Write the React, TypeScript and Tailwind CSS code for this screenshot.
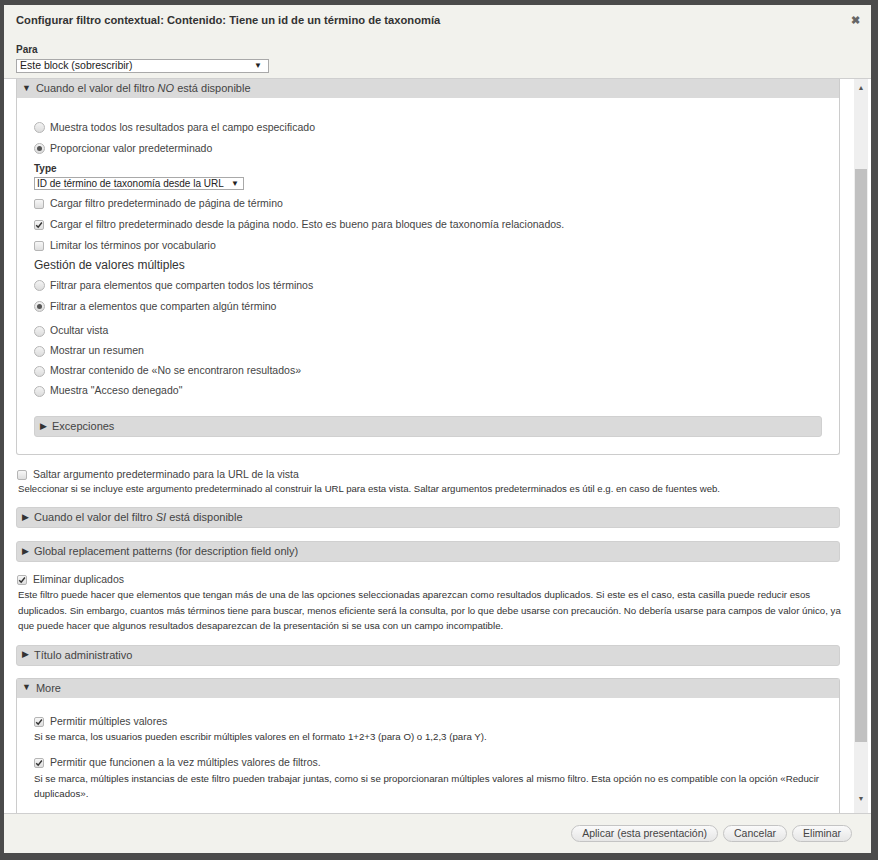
import React from "react";

const font = { fontFamily: '"Liberation Sans", Arial, sans-serif' };

function Radio({ checked = false }: { checked?: boolean }) {
  return (
    <span className="flex size-[11px] shrink-0 items-center justify-center rounded-full border border-[#b5b5b5] bg-[linear-gradient(#f4f4f4,#dcdcdc)]">
      {checked && <span className="size-[5px] rounded-full bg-[#555]" />}
    </span>
  );
}

function Check({ checked = false }: { checked?: boolean }) {
  return (
    <span className="flex size-[10px] shrink-0 items-center justify-center rounded-[2px] border border-[#b5b5b5] bg-[linear-gradient(#f7f7f7,#dedede)]">
      {checked && (
        <svg viewBox="0 0 10 10" className="size-[8px]">
          <path d="M1.5 5.2 L4 7.8 L8.6 1.8" fill="none" stroke="#333" strokeWidth="1.8" />
        </svg>
      )}
    </span>
  );
}

function RadioRow({ label, checked, h = "h-[21px]" }: { label: string; checked?: boolean; h?: string }) {
  return (
    <div className={`flex items-center gap-[5px] pl-[17px] ${h}`}>
      <Radio checked={checked} />
      <span className="text-[10.5px] text-[#444]">{label}</span>
    </div>
  );
}

function CheckRow({ label, checked }: { label: string; checked?: boolean }) {
  return (
    <div className="flex h-[21px] items-center gap-[6px] pl-[17px]">
      <Check checked={checked} />
      <span className="text-[10.5px] text-[#444]">{label}</span>
    </div>
  );
}

function Collapsed({ label, className = "" }: { label: React.ReactNode; className?: string }) {
  return (
    <div className={`flex h-[21px] items-center gap-[5px] rounded-[3px] border border-[#d0d0d0] bg-[#dadada] pl-[5px] text-[11px] text-[#444] ${className}`}>
      <span className="text-[9px] text-[#333]">▶</span>
      <span>{label}</span>
    </div>
  );
}

export default function App() {
  return (
    <div className="h-[860px] w-[878px] overflow-hidden bg-[#4b4b4b] pl-[4px] pt-[5px]" style={font}>
      <div className="flex h-[848px] w-[867px] flex-col bg-white">
        {/* Title bar */}
        <div className="h-[74px] border-b border-[#cfcfcf] bg-[#f2f2ed] px-[12px]">
          <div className="flex h-[31px] items-center justify-between">
            <h1 className="text-[11.2px] font-bold text-[#333]">
              Configurar filtro contextual: Contenido: Tiene un id de un término de taxonomía
            </h1>
            <span className="mr-[-1px] text-[11px] font-bold text-[#666]">✖</span>
          </div>
          <div className="mt-[6px] text-[10px] font-bold text-[#333]">Para</div>
          <div className="mt-[2px] flex h-[14px] w-[253px] items-center justify-between border border-[#a9a9a9] bg-white pl-[3px] pr-[6px] text-[10.5px] text-[#222]">
            <span>Este block (sobrescribir)</span>
            <span className="text-[8px]">▼</span>
          </div>
        </div>

        {/* Body */}
        <div className="flex h-[734px]">
          <div className="flex-1 overflow-hidden pl-[12px] pr-[12px]">
            {/* Fieldset NO */}
            <div className="w-[824px] rounded-b-[3px] border border-t-0 border-[#ccc] pb-[17px]">
              <div className="flex h-[19px] items-center gap-[5px] bg-[#dadada] pl-[5px] text-[11px] text-[#444]">
                <span className="text-[9px] text-[#333]">▼</span>
                <span>
                  Cuando el valor del filtro <em>NO</em> está disponible
                </span>
              </div>
              <div className="mt-[19px]">
                <RadioRow label="Muestra todos los resultados para el campo especificado" />
                <RadioRow label="Proporcionar valor predeterminado" checked />
              </div>
              <div className="mt-[2px] flex h-[14px] items-center pl-[17px] text-[10px] font-bold text-[#333]">Type</div>
              <div className="ml-[17px] mt-[2px] flex h-[13px] w-[210px] items-center justify-between whitespace-nowrap border border-[#a9a9a9] pl-[2px] pr-[4px] text-[10px] text-[#222]">
                <span>ID de término de taxonomía desde la URL</span>
                <span className="text-[8px]">▼</span>
              </div>
              <div className="mt-[3px]">
                <CheckRow label="Cargar filtro predeterminado de página de término" />
                <CheckRow label="Cargar el filtro predeterminado desde la página nodo. Esto es bueno para bloques de taxonomía relacionados." checked />
                <CheckRow label="Limitar los términos por vocabulario" />
              </div>
              <div className="flex h-[18px] items-center pl-[17px] text-[12px] text-[#333]">Gestión de valores múltiples</div>
              <div className="mt-[1px]">
                <RadioRow label="Filtrar para elementos que comparten todos los términos" />
                <RadioRow label="Filtrar a elementos que comparten algún término" checked />
              </div>
              <div className="mt-[4px]">
                <RadioRow h="h-[20px]" label="Ocultar vista" />
                <RadioRow h="h-[20px]" label="Mostrar un resumen" />
                <RadioRow h="h-[20px]" label="Mostrar contenido de «No se encontraron resultados»" />
                <RadioRow h="h-[20px]" label='Muestra "Acceso denegado"' />
              </div>
              <div className="mt-[15px] px-[17px]">
                <Collapsed label="Excepciones" />
              </div>
            </div>

            {/* Skip default */}
            <div className="mt-[12px] flex h-[15px] items-center gap-[6px] pl-[1px]">
              <Check />
              <span className="text-[10.5px] text-[#444]">Saltar argumento predeterminado para la URL de la vista</span>
            </div>
            <p className="h-[14px] pl-[2px] text-[9.6px] leading-[14px] text-[#333]">
              Seleccionar si se incluye este argumento predeterminado al construir la URL para esta vista. Saltar argumentos predeterminados es útil e.g. en caso de fuentes web.
            </p>

            <Collapsed
              className="mt-[11px] w-[824px]"
              label={
                <>
                  Cuando el valor del filtro <em>SI</em> está disponible
                </>
              }
            />
            <Collapsed className="mt-[13px] w-[824px]" label="Global replacement patterns (for description field only)" />

            <div className="mt-[10px] flex h-[15px] items-center gap-[6px] pl-[1px]">
              <Check checked />
              <span className="text-[10.5px] text-[#444]">Eliminar duplicados</span>
            </div>
            <p className="w-[830px] whitespace-nowrap pl-[2px] text-[9.7px] leading-[15.5px] text-[#333]">
              Este filtro puede hacer que elementos que tengan más de una de las opciones seleccionadas aparezcan como resultados duplicados. Si este es el caso, esta casilla puede reducir esos
              <br />
              duplicados. Sin embargo, cuantos más términos tiene para buscar, menos eficiente será la consulta, por lo que debe usarse con precaución. No debería usarse para campos de valor único, ya
              <br />
              que puede hacer que algunos resultados desaparezcan de la presentación si se usa con un campo incompatible.
            </p>

            <Collapsed className="mt-[11px] w-[824px]" label="Título administrativo" />

            {/* More */}
            <div className="mt-[12px] w-[824px] rounded-t-[3px] border border-b-0 border-[#ccc] pb-[30px]">
              <div className="flex h-[19px] items-center gap-[5px] bg-[#dadada] pl-[5px] text-[11px] text-[#444]">
                <span className="text-[9px] text-[#333]">▼</span>
                <span>More</span>
              </div>
              <div className="mt-[17px] flex h-[15px] items-center gap-[6px] pl-[17px]">
                <Check checked />
                <span className="text-[10.5px] text-[#444]">Permitir múltiples valores</span>
              </div>
              <p className="pl-[17px] text-[9.7px] leading-[14px] text-[#333]">
                Si se marca, los usuarios pueden escribir múltiples valores en el formato 1+2+3 (para O) o 1,2,3 (para Y).
              </p>
              <div className="mt-[12px] flex h-[15px] items-center gap-[6px] pl-[17px]">
                <Check checked />
                <span className="text-[10.5px] text-[#444]">Permitir que funcionen a la vez múltiples valores de filtros.</span>
              </div>
              <p className="whitespace-nowrap pl-[17px] text-[9.7px] leading-[15.5px] text-[#333]">
                Si se marca, múltiples instancias de este filtro pueden trabajar juntas, como si se proporcionaran múltiples valores al mismo filtro. Esta opción no es compatible con la opción «Reducir
                <br />
                duplicados».
              </p>
            </div>
          </div>

          {/* Scrollbar */}
          <div className="mr-[3px] flex w-[14px] flex-col items-center bg-[#efefef]">
            <span className="mt-[5px] h-[8px] text-[7px] leading-[8px] text-[#555]">▲</span>
            <div className="mt-[77px] h-[573px] w-[12px] bg-[#c1c1c1]" />
            <div className="flex-1" />
            <span className="mb-[10px] h-[8px] text-[7px] leading-[8px] text-[#555]">▼</span>
          </div>
        </div>

        {/* Footer */}
        <div className="flex flex-1 items-center justify-end gap-[5px] border-t border-[#cfcfcf] bg-[#f2f2ed] pr-[19px]">
          {["Aplicar (esta presentación)", "Cancelar", "Eliminar"].map((b) => (
            <button
              key={b}
              className="h-[17px] rounded-full border border-[#c4c4c4] bg-[linear-gradient(#fafafa,#e6e6e6)] px-[10px] text-[10.5px] text-[#444]"
            >
              {b}
            </button>
          ))}
        </div>
      </div>
    </div>
  );
}
